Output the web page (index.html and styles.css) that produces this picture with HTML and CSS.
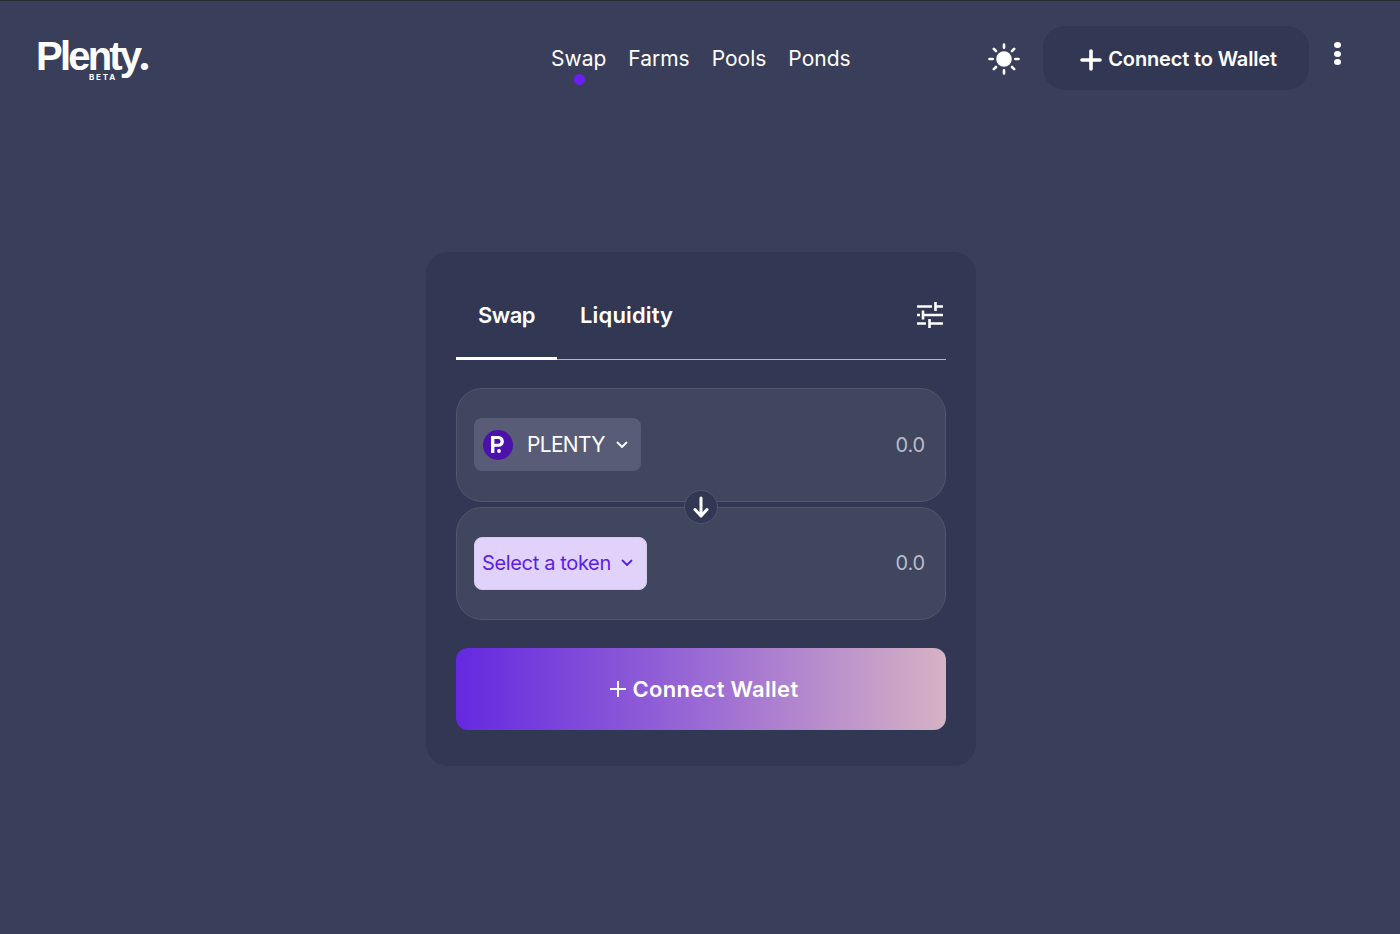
FILE: index.html
```
<!DOCTYPE html>
<html lang="en">
<head>
<meta charset="utf-8">
<title>Plenty</title>
<link rel="stylesheet" href="styles.css">
</head>
<body>
<header class="header">
  <div class="logo">
    <span class="logo-word">Plenty<span class="logo-dot">.</span></span>
    <span class="logo-beta">BETA</span>
  </div>
  <nav class="nav">
    <a class="nav-link nav-active">Swap</a>
    <a class="nav-link">Farms</a>
    <a class="nav-link">Pools</a>
    <a class="nav-link">Ponds</a>
  </nav>
  <svg class="sun" width="32" height="32" viewBox="0 0 32 32" fill="none" stroke="#fff" stroke-width="2.600" stroke-linecap="round">
    <circle cx="16" cy="16" r="7.800" fill="#fff" stroke="none"/>
    <path d="M16 1.500v3.200M16 27.300v3.200M1.500 16h3.200M27.300 16h3.200M5.800 5.800l2.200 2.200M24 24l2.200 2.200M5.800 26.200l2.200-2.200M24 8l2.200-2.200"/>
  </svg>
  <button class="connect-top">
    <svg class="connect-plus" width="22" height="22" viewBox="0 0 22 22" stroke="#fff" stroke-width="3.600" stroke-linecap="round"><path d="M11 2v18M2 11h18"/></svg>
    <span>Connect to Wallet</span>
  </button>
  <div class="dots"><i></i><i></i><i></i></div>
</header>
<main class="main">
  <section class="card">
    <div class="tabs">
      <div class="tab tab-active">Swap</div>
      <div class="tab tab-second">Liquidity</div>
      <svg class="sliders" width="26" height="26" viewBox="0 0 26 26" fill="none" stroke="#fff" stroke-width="2.600">
        <path d="M0 4.500h15M18.500 4.500h7.500M18.500 0v9M0 13h3M6 13h20M6 8.500v9M0 21.500h9M12.500 21.500h13.500M12.500 17v9"/>
      </svg>
    </div>
    <div class="boxes">
      <div class="box">
        <button class="token token-plenty">
          <span class="token-icon">
            <svg width="14" height="17" viewBox="0 0 14 17" fill="#fff"><path d="M0 0h7.500a5.200 5.200 0 0 1 0 10.800H3.400V17H0zM3.400 3v4.800h3.800a2.400 2.400 0 0 0 0-4.800z"/><circle cx="8" cy="15" r="1.900"/></svg>
          </span>
          <span class="token-name">PLENTY</span>
          <svg class="chev" width="12" height="8" viewBox="0 0 12 8" fill="none" stroke="#fff" stroke-width="1.800" stroke-linecap="round" stroke-linejoin="round"><path d="M1.500 1.500 6 6l4.500-4.500"/></svg>
        </button>
        <span class="amount">0.0</span>
      </div>
      <div class="swap-arrow">
        <svg width="18" height="24" viewBox="0 0 18 24" fill="none" stroke="#fff" stroke-width="3" stroke-linecap="round" stroke-linejoin="round"><path d="M9 3v18M3 14.500 9 21l6-6.500"/></svg>
      </div>
      <div class="box">
        <button class="token token-select">
          <span>Select a token</span>
          <svg class="chev" width="12" height="8" viewBox="0 0 12 8" fill="none" stroke="#5b21e0" stroke-width="1.800" stroke-linecap="round" stroke-linejoin="round"><path d="M1.500 1.500 6 6l4.500-4.500"/></svg>
        </button>
        <span class="amount">0.0</span>
      </div>
    </div>
    <button class="connect-main">
      <svg width="18" height="18" viewBox="0 0 18 18" stroke="#fff" stroke-width="2"><path d="M9 1v16M1 9h16"/></svg>
      <span>Connect Wallet</span>
    </button>
  </section>
</main>
</body>
</html>
```

FILE: styles.css
```
* { box-sizing: border-box; }
html, body { margin: 0; height: 100%; }
body {
  background: #393e5a;
  border-top: 1px solid #2a2c33;
  color: #fff;
  font-family: "Inter", "Noto Sans", sans-serif;
  overflow: hidden;
}
button { font-family: inherit; border: 0; cursor: pointer; color: inherit; }

.header {
  display: flex;
  align-items: flex-start;
  height: 251px;
  padding: 25px 0 0 36px;
}
.logo {
  position: relative;
  width: 114px;
  height: 50px;
  margin-top: 4px;
}
.logo-word {
  display: block;
  font-family: "Liberation Sans", sans-serif;
  font-size: 40px;
  font-weight: 700;
  line-height: 46px;
  letter-spacing: -2.800px;
  white-space: nowrap;
}
.logo-dot {
  font-family: "Lato", sans-serif;
  font-size: 44px;
  font-weight: 900;
  letter-spacing: 0;
}
.logo-beta {
  position: absolute;
  left: 53px;
  top: 42px;
  font-size: 8px;
  font-weight: 700;
  line-height: 10px;
  letter-spacing: 1.800px;
}
.nav {
  display: flex;
  gap: 22px;
  margin-left: 401px;
  margin-top: 19px;
}
.nav-link {
  position: relative;
  font-size: 21px;
  line-height: 28px;
}
.nav-active::after {
  content: "";
  position: absolute;
  left: 50%;
  bottom: -12px;
  width: 11px;
  height: 11px;
  margin-left: -5px;
  border-radius: 50%;
  background: #6a1ef5;
}
.sun { margin-left: 137px; margin-top: 17px; }
.connect-top {
  display: flex;
  align-items: center;
  justify-content: center;
  gap: 6px;
  width: 266px;
  height: 64px;
  margin-left: 23px;
  padding: 2px 0 0 6px;
  border-radius: 22px;
  background: #323753;
  font-size: 20px;
  font-weight: 600;
  letter-spacing: -0.15px;
}
.connect-plus { margin-top: 1px; }
.dots {
  display: flex;
  flex-direction: column;
  gap: 2.500px;
  margin-left: 25px;
  margin-top: 16px;
}
.dots i {
  display: block;
  width: 7px;
  height: 6px;
  border-radius: 50%;
  background: #fff;
}

.main {
  display: flex;
  justify-content: center;
  padding-left: 2px;
}
.card {
  width: 550px;
  height: 514px;
  padding: 0 30px;
  border-radius: 22px;
  background: #323753;
}
.tabs {
  position: relative;
  display: flex;
  align-items: center;
  height: 108px;
  padding-top: 18px;
  border-bottom: 1px solid #b5b8c6;
}
.tab {
  font-size: 22px;
  font-weight: 600;
}
.tab-active {
  width: 101px;
  padding-left: 22px;
  letter-spacing: -0.5px;
}
.tab-active::after {
  content: "";
  position: absolute;
  left: 0;
  bottom: -1px;
  width: 101px;
  height: 3px;
  background: #fff;
}
.tab-second { margin-left: 23px; letter-spacing: 0.15px; }
.sliders { margin-left: auto; margin-right: 3px; }

.boxes {
  position: relative;
  display: flex;
  flex-direction: column;
  gap: 5px;
  margin-top: 28px;
}
.box {
  display: flex;
  align-items: center;
  justify-content: space-between;
  height: 114px;
  padding: 0 20px 0 17px;
  border: 1px solid #52566f;
  border-radius: 26px;
  background: #41465f;
}
.box + .swap-arrow + .box { height: 113px; }
.token {
  display: flex;
  align-items: center;
  height: 53px;
  margin-bottom: 1px;
  border-radius: 8px;
}
.token-plenty {
  width: 167px;
  padding-left: 9px;
  background: #585c76;
  font-size: 21px;
}
.token-icon {
  display: flex;
  align-items: center;
  justify-content: center;
  width: 30px;
  height: 30px;
  border-radius: 50%;
  background: #4c11a9;
  margin-right: 14px;
}
.token-name { margin-right: 11px; letter-spacing: -0.7px; }
.token-select {
  width: 173px;
  padding-left: 7px;
  background: #e0d2fb;
  color: #5b21e0;
  font-size: 20px;
  gap: 10px;
  letter-spacing: -0.35px;
  border: 1px solid #d3cbee;
}
.amount {
  font-size: 20px;
  color: #b9bccb;
  letter-spacing: -0.2px;
  margin-bottom: 1px;
}
.swap-arrow {
  position: absolute;
  left: 228px;
  top: 102px;
  display: flex;
  align-items: center;
  justify-content: center;
  width: 34px;
  height: 34px;
  border-radius: 50%;
  background: #323753;
  border: 1px solid #52566f;
}
.connect-main {
  display: flex;
  align-items: center;
  justify-content: center;
  gap: 5px;
  width: 100%;
  height: 82px;
  margin-top: 28px;
  padding: 0 0 0 6px;
  border-radius: 12px;
  background: linear-gradient(90deg, #6429e0 0%, #9a6ad4 50%, #d6b2c4 100%);
  font-size: 22px;
  font-weight: 600;
  letter-spacing: 0.3px;
}
```
